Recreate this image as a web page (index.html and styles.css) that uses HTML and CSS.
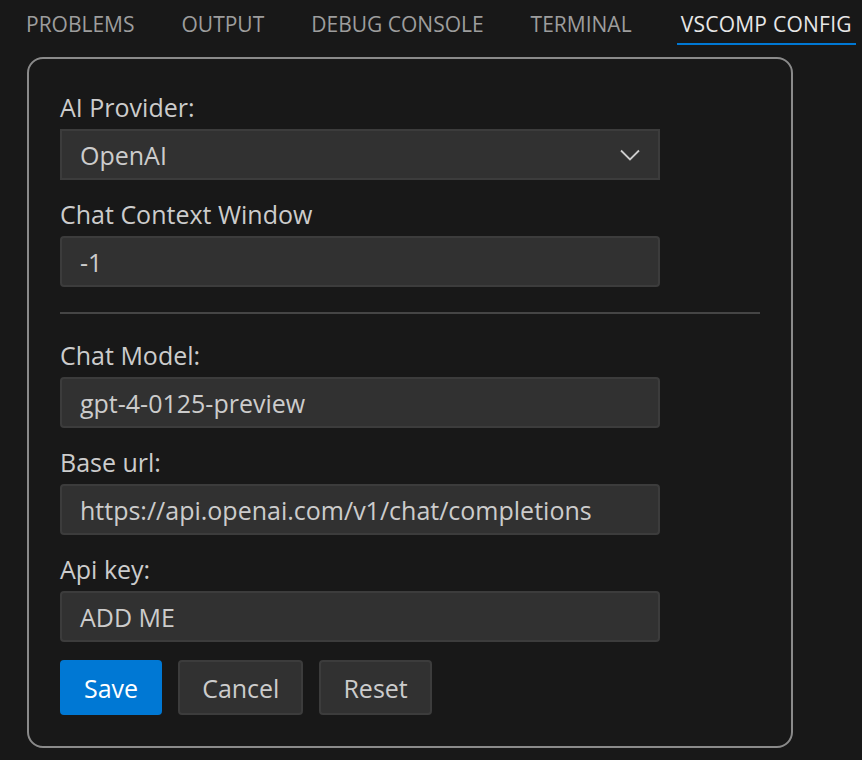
FILE: index.html
```html
<!DOCTYPE html>
<html>
<head>
<meta charset="utf-8">
<link rel="stylesheet" href="styles.css">
</head>
<body>
<div class="tabs">
  <div class="tab">PROBLEMS</div>
  <div class="tab">OUTPUT</div>
  <div class="tab">DEBUG CONSOLE</div>
  <div class="tab">TERMINAL</div>
  <div class="tab active">VSCOMP CONFIG</div>
</div>
<div class="panel">
  <div class="field">
    <label class="label">AI Provider:</label>
    <div class="select">
      <span>OpenAI</span>
      <svg class="chev" width="20" height="12" viewBox="0 0 20 12"><path d="M1 1.5 L10 10.5 L19 1.5" fill="none" stroke="#cccccc" stroke-width="1.8"/></svg>
    </div>
  </div>
  <div class="field">
    <label class="label">Chat Context Window</label>
    <div class="input">-1</div>
  </div>
  <hr class="divider">
  <div class="field">
    <label class="label">Chat Model:</label>
    <div class="input">gpt-4-0125-preview</div>
  </div>
  <div class="field">
    <label class="label">Base url:</label>
    <div class="input">https://api.openai.com/v1/chat/completions</div>
  </div>
  <div class="field">
    <label class="label">Api key:</label>
    <div class="input">ADD ME</div>
  </div>
  <div class="buttons">
    <button class="btn primary">Save</button>
    <button class="btn">Cancel</button>
    <button class="btn">Reset</button>
  </div>
</div>
</body>
</html>
```
FILE: styles.css
```css
html, body {
  margin: 0;
  padding: 0;
  background: #181818;
}
body {
  font-family: "Open Sans", "Noto Sans", sans-serif;
  color: #cccccc;
  width: 862px;
  height: 760px;
  overflow: hidden;
}
.tabs {
  display: flex;
  gap: 39px;
  padding-left: 22px;
  height: 46px;
  box-sizing: border-box;
  overflow: hidden;
}
.tab {
  flex-shrink: 0;
  white-space: nowrap;
  font-size: 21px;
  color: #9d9d9d;
  padding: 10px 4px 0;
  height: 45px;
  box-sizing: border-box;
}
.tab.active {
  color: #e7e7e7;
  border-bottom: 2px solid #0078d4;
  letter-spacing: 0.25px;
  margin-left: 2px;
}
.panel {
  margin: 11px 0 0 27px;
  width: 766px;
  height: 691px;
  box-sizing: border-box;
  border: 2px solid #8a8a8a;
  border-radius: 16px;
  padding: 14px 31px 0;
}
.field {
  width: 600px;
  display: flex;
  flex-direction: column;
}
.label {
  font-size: 25px;
  line-height: 36px;
  padding: 16px 0 4px;
  color: #cccccc;
}
.select, .input {
  height: 51px;
  box-sizing: border-box;
  background: #313131;
  border: 2px solid #3c3c3c;
  border-radius: 4px;
  font-size: 25px;
  color: #cccccc;
  padding: 0 18px;
  display: flex;
  align-items: center;
}
.select {
  justify-content: space-between;
  border-radius: 0;
}
.divider {
  border: none;
  height: 2px;
  background: #454545;
  margin: 25px 0 7px;
  width: 700px;
}
.buttons {
  display: flex;
  gap: 16px;
  margin-top: 18px;
}
.btn {
  font-family: inherit;
  font-size: 25px;
  height: 55px;
  padding: 0 22px;
  border-radius: 4px;
  border: 2px solid #3c3c3c;
  background: #313131;
  color: #cccccc;
}
.btn.primary {
  background: #0078d4;
  border-color: #0078d4;
  color: #ffffff;
}
```
